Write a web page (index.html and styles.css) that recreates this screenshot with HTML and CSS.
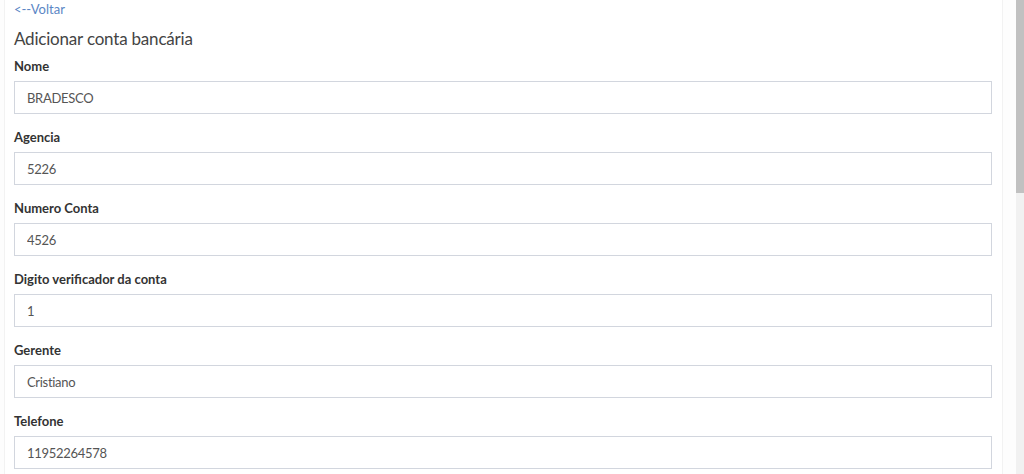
FILE: index.html
```html
<!DOCTYPE html>
<html>
  <head>
    <meta charset="utf-8">
    <title>Adicionar conta bancária</title>
    <link rel="stylesheet" href="styles.css">
  </head>
  <body>
    <div class="page">
      <div class="box">
        <a href="#" class="back-link">&lt;--Voltar</a>
        <h3 class="box-title">Adicionar conta bancária</h3>
        <form id="contaForm">
          <div class="form-group">
            <label>Nome</label>
            <input type="text" class="form-control" value="BRADESCO" />
          </div>
          <div class="form-group">
            <label>Agencia</label>
            <input type="text" class="form-control" value="5226" />
          </div>
          <div class="form-group">
            <label>Numero Conta</label>
            <input type="text" class="form-control" value="4526" />
          </div>
          <div class="form-group">
            <label>Digito verificador da conta</label>
            <input type="text" class="form-control" value="1" />
          </div>
          <div class="form-group">
            <label>Gerente</label>
            <input type="text" class="form-control" value="Cristiano" />
          </div>
          <div class="form-group">
            <label>Telefone</label>
            <input type="text" class="form-control" value="11952264578" />
          </div>
        </form>
      </div>
    </div>
    <div class="scrollbar">
      <div class="scrollbar-thumb"></div>
    </div>
  </body>
</html>
```

FILE: styles.css
```css
html,
body {
  height: 100%;
}

body {
  margin: 0;
  display: flex;
  overflow: hidden;
  background: #fdfdfd;
  font-family: "Lato", "Liberation Sans", sans-serif;
  color: #333;
}

.page {
  flex: 1;
  overflow: hidden;
}

.box {
  width: 978px;
  margin-left: 4px;
  padding: 0 10px 0 9px;
  min-height: 100%;
  border-left: 1px solid #f2f2f2;
  border-right: 1px solid #f2f2f2;
  background: #fff;
}

.back-link {
  display: block;
  padding-top: 1px;
  font-size: 13px;
  line-height: 17px;
  color: #5a86c5;
  text-decoration: none;
}

.box-title {
  margin: 10px 0 8px;
  font-size: 17px;
  font-weight: 400;
  line-height: 22px;
  letter-spacing: -0.2px;
  color: #444;
}

.form-group {
  margin-bottom: 15px;
}

.form-group label {
  display: block;
  margin-bottom: 6px;
  font-size: 13px;
  font-weight: 700;
  line-height: 17px;
  color: #333;
}

.form-control {
  display: block;
  width: 100%;
  height: 33px;
  padding: 6px 12px;
  border: 1px solid #d2d6de;
  border-radius: 0;
  box-sizing: border-box;
  background: #fff;
  font-family: inherit;
  font-size: 13px;
  letter-spacing: -0.3px;
  color: #555;
}

.scrollbar {
  width: 8px;
  background: #f1f1f1;
}

.scrollbar-thumb {
  height: 193px;
  background: #c1c1c1;
}
```
